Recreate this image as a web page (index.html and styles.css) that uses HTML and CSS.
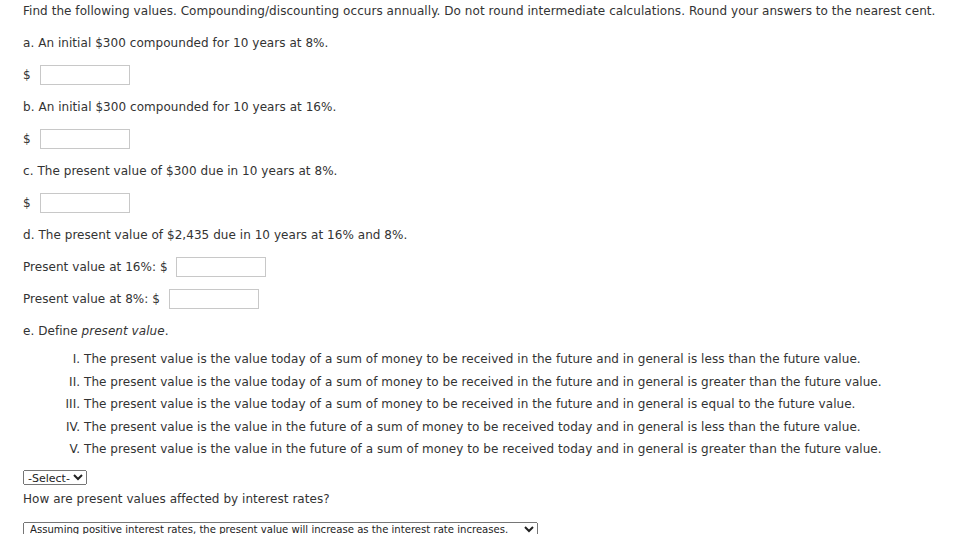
FILE: index.html
```html
<!DOCTYPE html>
<html lang="en">

<head>
    <meta charset="UTF-8">
    <title>Present Value</title>
    <link rel="stylesheet" href="styles.css">
</head>

<body>
    <div class="question-container">
        <p class="row">Find the following values. Compounding/discounting occurs annually. Do not round intermediate calculations. Round your answers to the nearest cent.</p>

        <p class="row">a. An initial $300 compounded for 10 years at 8%.</p>
        <p class="row">$ <input type="text" class="answer"></p>

        <p class="row">b. An initial $300 compounded for 10 years at 16%.</p>
        <p class="row">$ <input type="text" class="answer"></p>

        <p class="row">c. The present value of $300 due in 10 years at 8%.</p>
        <p class="row">$ <input type="text" class="answer"></p>

        <p class="row">d. The present value of $2,435 due in 10 years at 16% and 8%.</p>
        <p class="row">Present value at 16%: $ <input type="text" class="answer"></p>
        <p class="row">Present value at 8%: $ <input type="text" class="answer"></p>

        <p class="row lead">e. Define <em>present value</em>.</p>
        <ol class="choices">
            <li>The present value is the value today of a sum of money to be received in the future and in general is less than the future value.</li>
            <li>The present value is the value today of a sum of money to be received in the future and in general is greater than the future value.</li>
            <li>The present value is the value today of a sum of money to be received in the future and in general is equal to the future value.</li>
            <li>The present value is the value in the future of a sum of money to be received today and in general is less than the future value.</li>
            <li>The present value is the value in the future of a sum of money to be received today and in general is greater than the future value.</li>
        </ol>

        <select class="pick">
            <option>-Select-</option>
            <option>I</option>
            <option>II</option>
            <option>III</option>
            <option>IV</option>
            <option>V</option>
        </select>
        <p class="prompt">How are present values affected by interest rates?</p>

        <select class="pick wide">
            <option>Assuming positive interest rates, the present value will increase as the interest rate increases.</option>
            <option>Assuming positive interest rates, the present value will decrease as the interest rate increases.</option>
        </select>
    </div>
</body>
</html>
```

FILE: styles.css
```css
body {
    font-family: "DejaVu Sans", Verdana, sans-serif;
    font-size: 12px;
    letter-spacing: 0.05px;
    color: #333;
    background-color: white;
    margin: 0;
    padding: 0;
}

.question-container {
    padding: 1px 0 0 23px;
}

.row {
    line-height: 20px;
    height: 20px;
    margin: 0 0 12px;
}

.row.lead {
    margin-bottom: 7px;
}

.answer {
    width: 90px;
    height: 20px;
    box-sizing: border-box;
    border: 1px solid #c8c8c8;
    margin: 0 0 0 5px;
    padding: 0 3px;
    vertical-align: top;
    font-family: inherit;
    font-size: 12px;
}

.choices {
    list-style-type: upper-roman;
    margin: 0;
    padding-left: 61px;
}

.choices li {
    line-height: 22.5px;
}

.pick {
    font-family: "DejaVu Sans", Verdana, sans-serif;
    font-size: 11px;
    color: #222;
    box-sizing: border-box;
    height: 15px;
    line-height: 13px;
    padding: 0;
    margin-top: 9px;
    display: block;
}

.prompt {
    line-height: 20px;
    margin: 4px 0 13px;
}

.wide {
    width: 515px;
    font-size: 10.1px;
    padding-left: 2px;
    margin-top: 0;
}
```
